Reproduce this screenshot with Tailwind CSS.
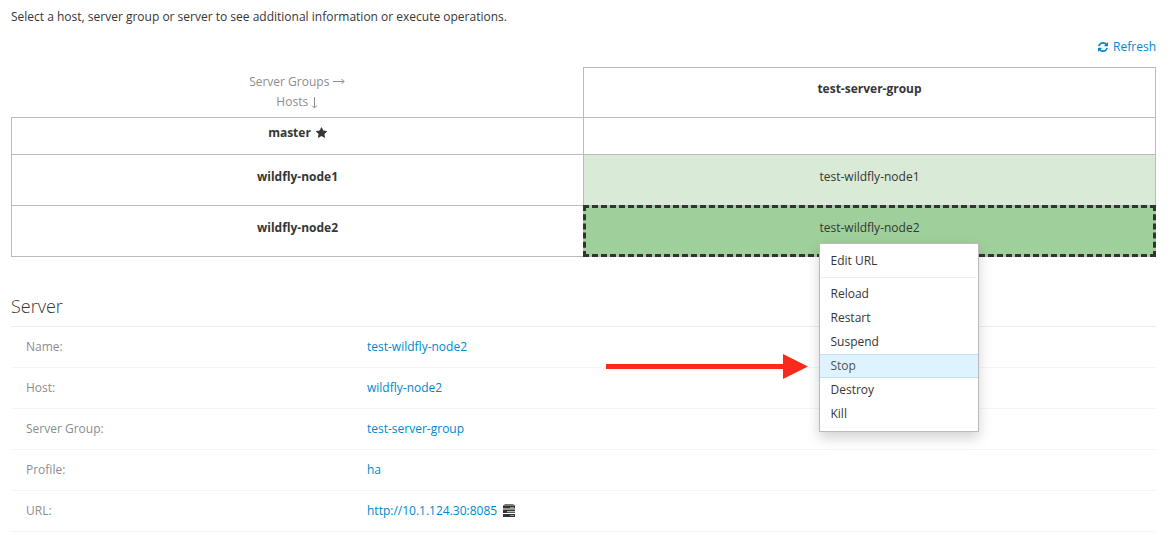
<!DOCTYPE html>
<html lang="en">
<head>
<meta charset="utf-8">
<title>Topology</title>
<script src="https://cdn.jsdelivr.net/npm/@tailwindcss/browser@4"></script>
</head>
<body class="bg-white pl-[11px] pr-[17px] pt-[7px] font-['Open_Sans','Noto_Sans',sans-serif] text-xs leading-5 text-[#363636]">
<main>
  <p>Select a host, server group or server to see additional information or execute operations.</p>
  <div class="mt-[10px] flex justify-end">
    <button type="button" class="flex items-center gap-[5px] text-[#0088ce]">
      <svg class="size-[10px]" viewBox="0 0 1536 1536" fill="currentColor" aria-hidden="true"><path d="M1511 928q0 5-1 7-64 268-268 434.500T764 1536q-146 0-282.500-55T238 1324l-129 129q-19 19-45 19t-45-19-19-45V960q0-26 19-45t45-19h448q26 0 45 19t19 45-19 45l-137 137q71 66 161 102t187 36q134 0 250-65t186-179q11-17 53-117 8-23 30-23h192q13 0 22.500 9.500t9.500 22.500zm25-800v448q0 26-19 45t-45 19h-448q-26 0-45-19t-19-45 19-45l138-138Q969 256 768 256q-134 0-250 65T332 500q-11 17-53 117-8 23-30 23H50q-13 0-22.500-9.500T18 608v-7q65-268 270-434.500T768 0q146 0 284 55.500T1297 212l130-129q19-19 45-19t45 19 19 45z"/></svg>
      <span>Refresh</span>
    </button>
  </div>

  <table class="mt-[10px] w-full table-fixed border-collapse text-center align-top">
    <thead>
      <tr class="h-[50px] align-top">
        <td class="pt-1 text-[#8b8d8f]">
          <div class="flex items-center justify-center gap-1"><span>Server Groups</span>
            <svg class="h-[7px] w-3" viewBox="0 0 12 7" fill="none" stroke="currentColor" role="img" aria-label="across"><path d="M0 3.500H11M8.500 1l2.500 2.500L8.500 6"/></svg>
          </div>
          <div class="flex items-center justify-center gap-[3px]"><span>Hosts</span>
            <svg class="mt-0.5 h-3 w-[7px]" viewBox="0 0 7 12" fill="none" stroke="currentColor" role="img" aria-label="down"><path d="M3.500 0V11M1 8.500l2.500 2.500L6 8.500"/></svg>
          </div>
        </td>
        <th scope="col" class="border border-[#bbb] pt-[11px] font-bold">test-server-group</th>
      </tr>
    </thead>
    <tbody>
      <tr class="h-[37px] align-top">
        <th scope="row" class="border border-[#bbb] pt-[5px] font-bold">
          <span class="inline-flex items-center gap-[5px]">master
            <svg class="mb-px size-[11px]" viewBox="0 0 1664 1587" fill="currentColor" aria-hidden="true"><path d="M1664 615q0 22-26 48l-363 354 86 500q1 7 1 20 0 21-10.500 35.500T1321 1587q-19 0-40-12l-449-236-449 236q-22 12-40 12-21 0-31.500-14.500T301 1537q0-6 2-20l86-500L25 663Q0 636 0 615q0-37 56-46l502-73L783 41q19-41 49-41t49 41l225 455 502 73q56 9 56 46z"/></svg>
          </span>
        </th>
        <td class="border border-[#bbb]"></td>
      </tr>
      <tr class="h-[51px] align-top">
        <th scope="row" class="border border-[#bbb] pt-3 font-bold">wildfly-node1</th>
        <td class="border border-[#bbb] bg-[#d9ead7] pt-3">test-wildfly-node1</td>
      </tr>
      <tr class="h-[51px] align-top">
        <th scope="row" class="border border-[#bbb] pt-3 font-bold">wildfly-node2</th>
        <td class="relative border border-[#bbb] bg-[#9fcf9a] pt-3 after:pointer-events-none after:absolute after:-inset-px after:border-3 after:border-dashed after:border-[#333] after:content-['']">
          <div class="relative z-10 inline-block text-left">
            <span>test-wildfly-node2</span>
            <ul role="menu" class="absolute left-0 top-full z-10 mt-[5px] w-40 border border-[#bbb] bg-white py-[5px] shadow-[0_6px_12px_rgba(0,0,0,0.175)]">
              <li><button type="button" role="menuitem" class="block h-6 w-full px-[10px] text-left">Edit URL</button></li>
              <li role="separator" class="mx-px my-1 h-px bg-[#ededed]"></li>
              <li><button type="button" role="menuitem" class="block h-6 w-full px-[10px] text-left">Reload</button></li>
              <li><button type="button" role="menuitem" class="block h-6 w-full px-[10px] text-left">Restart</button></li>
              <li><button type="button" role="menuitem" class="block h-6 w-full px-[10px] text-left">Suspend</button></li>
              <li><button type="button" role="menuitem" class="block h-6 w-full border-y border-[#bee1f4] bg-[#def3ff] px-[10px] text-left text-[#4d5258]">Stop</button></li>
              <li><button type="button" role="menuitem" class="block h-6 w-full px-[10px] text-left">Destroy</button></li>
              <li><button type="button" role="menuitem" class="block h-6 w-full px-[10px] text-left">Kill</button></li>
            </ul>
            <svg class="absolute right-full top-full mr-[11px] mt-[116px] h-[25px] w-[202px]" viewBox="0 0 202 25" fill="#fc2a1c" aria-hidden="true"><path d="M0 10H177V0L202 12.500 177 25V15H0z"/></svg>
          </div>
        </td>
      </tr>
    </tbody>
  </table>

  <section class="mt-[39px]">
    <h2 class="border-b border-[#ededed] pb-[10px] text-lg leading-5 font-light">Server</h2>
    <dl>
      <div class="flex border-b border-[#f5f5f5] px-[15px] py-[10px]"><dt class="w-[341px] text-[#8b8d8f]">Name:</dt><dd><a href="#" class="text-[#0088ce]">test-wildfly-node2</a></dd></div>
      <div class="flex border-b border-[#f5f5f5] px-[15px] py-[10px]"><dt class="w-[341px] text-[#8b8d8f]">Host:</dt><dd><a href="#" class="text-[#0088ce]">wildfly-node2</a></dd></div>
      <div class="flex border-b border-[#f5f5f5] px-[15px] py-[10px]"><dt class="w-[341px] text-[#8b8d8f]">Server Group:</dt><dd><a href="#" class="text-[#0088ce]">test-server-group</a></dd></div>
      <div class="flex border-b border-[#f5f5f5] px-[15px] py-[10px]"><dt class="w-[341px] text-[#8b8d8f]">Profile:</dt><dd><a href="#" class="text-[#0088ce]">ha</a></dd></div>
      <div class="flex border-b border-[#f5f5f5] px-[15px] py-[10px]"><dt class="w-[341px] text-[#8b8d8f]">URL:</dt>
        <dd class="flex items-center gap-[6px]"><a href="#" class="text-[#0088ce]">http://10.1.124.30:8085</a>
          <svg class="mb-0.5 h-[13px] w-3" viewBox="0 0 12 13" aria-hidden="true"><path fill="#777" d="M2 0h8l2 1.500H0z"/><path fill="#333" d="M0 1.500h12V4.500H0zM0 5.500h12V9H0zM0 10h12v3H0z"/><path fill="#bbb" d="M7 3h4v.8H7zM4 7h8v1.200H4zM7 11h4v.8H7z"/></svg>
        </dd></div>
    </dl>
  </section>
</main>
</body>
</html>
